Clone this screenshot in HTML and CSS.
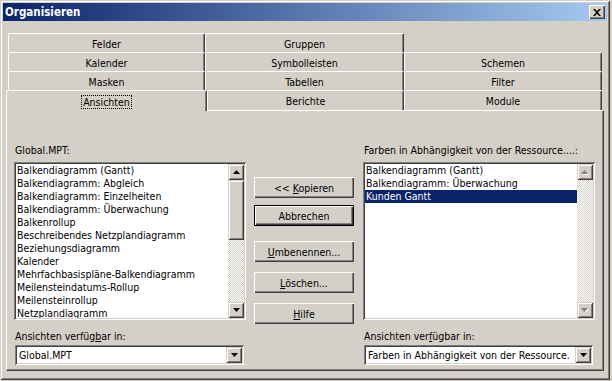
FILE: index.html
```html
<!DOCTYPE html>
<html lang="de">
<head>
  <meta charset="UTF-8">
  <meta name="viewport" content="width=device-width, initial-scale=1.0">
  <title>Organisieren</title>
  <link rel="stylesheet" href="styles.css">
</head>
<body>
  <div class="window">
    <div class="titlebar">
      <span class="title">Organisieren</span>
      <div class="close-btn">
        <svg width="8" height="7" viewBox="0 0 8 7">
          <path d="M0 0h2l2 2.2L6 0h2L5 3.5 8 7H6L4 4.8 2 7H0l3-3.5z" fill="#000"/>
        </svg>
      </div>
    </div>
    <div class="content">
      <div class="tabs">
        <div class="tab-row">
          <div class="tab w1">Felder</div>
          <div class="tab w2">Gruppen</div>
        </div>
        <div class="tab-row">
          <div class="tab w1">Kalender</div>
          <div class="tab w2">Symbolleisten</div>
          <div class="tab w3">Schemen</div>
        </div>
        <div class="tab-row">
          <div class="tab w1">Masken</div>
          <div class="tab w2">Tabellen</div>
          <div class="tab w3">Filter</div>
        </div>
        <div class="tab-row front">
          <div class="tab selected"><span class="focus">Ansichten</span></div>
          <div class="tab w2b">Berichte</div>
          <div class="tab w3">Module</div>
        </div>
      </div>

      <div class="panel">
        <div class="col">
          <div class="label">Global.MPT:</div>
          <div class="listbox">
            <ul class="items">
              <li>Balkendiagramm (Gantt)</li>
              <li>Balkendiagramm: Abgleich</li>
              <li>Balkendiagramm: Einzelheiten</li>
              <li>Balkendiagramm: Überwachung</li>
              <li>Balkenrollup</li>
              <li>Beschreibendes Netzplandiagramm</li>
              <li>Beziehungsdiagramm</li>
              <li>Kalender</li>
              <li>Mehrfachbasispläne-Balkendiagramm</li>
              <li>Meilensteindatums-Rollup</li>
              <li>Meilensteinrollup</li>
              <li>Netzplandiagramm</li>
            </ul>
            <div class="vscroll">
              <div class="sbtn"><svg width="7" height="4" viewBox="0 0 7 4"><path d="M3.5 0L7 4H0z" fill="#000"/></svg></div>
              <div class="thumb"></div>
              <div class="track"></div>
              <div class="sbtn"><svg width="7" height="4" viewBox="0 0 7 4"><path d="M0 0h7L3.5 4z" fill="#000"/></svg></div>
            </div>
          </div>
          <div class="label bottom">Ansichten verfüg<u>b</u>ar in:</div>
          <div class="combo">
            <span class="combo-text">Global.MPT</span>
            <div class="sbtn"><svg width="7" height="4" viewBox="0 0 7 4"><path d="M0 0h7L3.5 4z" fill="#000"/></svg></div>
          </div>
        </div>

        <div class="buttons">
          <div class="btn first"><span>&lt;&lt; <u>K</u>opieren</span></div>
          <div class="btn default"><span>Abbrechen</span></div>
          <div class="btn gap-big"><span><u>U</u>mbenennen...</span></div>
          <div class="btn gap-mid"><span><u>L</u>öschen...</span></div>
          <div class="btn gap-mid"><span><u>H</u>ilfe</span></div>
        </div>

        <div class="col">
          <div class="label">Farben in Abhängigkeit von der Ressource....:</div>
          <div class="listbox">
            <ul class="items">
              <li>Balkendiagramm (Gantt)</li>
              <li>Balkendiagramm: Überwachung</li>
              <li class="active">Kunden Gantt</li>
            </ul>
            <div class="vscroll">
              <div class="sbtn off"><svg width="8" height="5" viewBox="0 0 8 5"><path d="M4.5 1L8 5H1z" fill="#fff"/><path d="M3.5 0L7 4H0z" fill="#808080"/></svg></div>
              <div class="track"></div>
              <div class="sbtn off"><svg width="8" height="5" viewBox="0 0 8 5"><path d="M1 1h7L4.5 5z" fill="#fff"/><path d="M0 0h7L3.5 4z" fill="#808080"/></svg></div>
            </div>
          </div>
          <div class="label bottom">Ansichten ver<u>f</u>ügbar in:</div>
          <div class="combo">
            <span class="combo-text">Farben in Abhängigkeit von der Ressource.</span>
            <div class="sbtn"><svg width="7" height="4" viewBox="0 0 7 4"><path d="M0 0h7L3.5 4z" fill="#000"/></svg></div>
          </div>
        </div>
      </div>
    </div>
  </div>
</body>
</html>
```

FILE: styles.css
```css
body {
  margin: 0;
  background-color: #d4d0c8;
  font-family: "DejaVu Sans Condensed", "DejaVu Sans", sans-serif;
  font-stretch: condensed;
  font-size: 10.5px;
  color: #000;
}
.window {
  width: 610px;
  height: 380px;
  box-sizing: border-box;
  padding: 3px;
  background-color: #d4d0c8;
  box-shadow: inset 1px 1px #d4d0c8, inset -1px -1px #404040, inset 2px 2px #fff, inset -2px -2px #808080;
}
.titlebar {
  height: 18px;
  display: flex;
  align-items: center;
  justify-content: space-between;
  padding: 0 2px;
  background: linear-gradient(to right, #0a246a, #a6caf0);
}
.title {
  color: #fff;
  font-weight: bold;
  font-size: 11.5px;
}
.close-btn {
  width: 16px;
  height: 14px;
  box-sizing: border-box;
  display: flex;
  align-items: center;
  justify-content: center;
  background-color: #d4d0c8;
  box-shadow: inset 1px 1px #fff, inset -1px -1px #404040, inset -2px -2px #808080;
}
.content {
  padding: 12px 3px 0;
}

/* tabs */
.tabs {
  padding: 0 2px;
}
.tab-row {
  display: flex;
  align-items: flex-start;
  height: 19px;
}
.tab {
  height: 19px;
  box-sizing: border-box;
  display: flex;
  align-items: center;
  justify-content: center;
  padding-top: 1px;
  border-top: 1px solid #fff;
  border-left: 1px solid #fff;
  border-right: 1px solid #404040;
  border-radius: 2px 2px 0 0;
  box-shadow: inset -1px 0 #808080;
  background-color: #d4d0c8;
}
.w1 { width: 197px; }
.w2 { width: 199px; }
.w2b { width: 197px; }
.w3 { width: 198px; }
.tab-row.front {
  height: 20px;
  margin-left: -2px;
}
.tab-row.front .tab {
  height: 20px;
}
.tab-row.front .tab.selected {
  width: 201px;
  height: 21px;
  margin-bottom: -1px;
  position: relative;
  z-index: 1;
}
.focus {
  outline: 1px dotted #000;
  outline-offset: 0;
  padding: 0 1px;
  line-height: 12px;
}

/* panel */
.panel {
  height: 261px;
  box-sizing: border-box;
  display: flex;
  padding: 33px 0 0 7px;
  border-top: 1px solid #fff;
  border-left: 1px solid #fff;
  border-right: 1px solid #404040;
  border-bottom: 1px solid #404040;
  box-shadow: inset -1px -1px #808080;
}
.col {
  width: 232px;
  display: flex;
  flex-direction: column;
}
.label {
  line-height: 13px;
  height: 13px;
  padding-left: 1px;
  margin-bottom: 5px;
  white-space: nowrap;
}
.label.bottom {
  margin: 10px 0 2px;
}
.listbox {
  height: 158px;
  box-sizing: border-box;
  padding: 2px;
  display: flex;
  background-color: #fff;
  box-shadow: inset 1px 1px #808080, inset -1px -1px #fff, inset 2px 2px #404040, inset -2px -2px #d4d0c8;
}
.items {
  flex: 1;
  list-style: none;
  margin: 0;
  padding: 0;
  overflow: hidden;
}
.items li {
  height: 13px;
  line-height: 13px;
  padding-left: 1px;
  white-space: nowrap;
}
.items li.active {
  background-color: #0a246a;
  color: #fff;
}
.vscroll {
  width: 16px;
  display: flex;
  flex-direction: column;
}
.sbtn {
  width: 16px;
  height: 16px;
  flex: none;
  box-sizing: border-box;
  display: flex;
  align-items: center;
  justify-content: center;
  background-color: #d4d0c8;
  box-shadow: inset 1px 1px #d4d0c8, inset -1px -1px #404040, inset 2px 2px #fff, inset -2px -2px #808080;
}
.thumb {
  height: 60px;
  flex: none;
  background-color: #d4d0c8;
  box-shadow: inset 1px 1px #d4d0c8, inset -1px -1px #404040, inset 2px 2px #fff, inset -2px -2px #808080;
}
.track {
  flex: 1;
  background-color: #fff;
  background-image: repeating-conic-gradient(#d4d0c8 0 25%, #fff 0 50%);
  background-size: 2px 2px;
}
.combo {
  width: 229px;
  height: 20px;
  margin-left: 1px;
  box-sizing: border-box;
  padding: 2px;
  display: flex;
  align-items: center;
  background-color: #fff;
  box-shadow: inset 1px 1px #808080, inset -1px -1px #fff, inset 2px 2px #404040, inset -2px -2px #d4d0c8;
}
.combo-text {
  flex: 1;
  padding-left: 2px;
  white-space: nowrap;
  overflow: hidden;
}

/* middle buttons */
.buttons {
  width: 100px;
  margin: 0 9px 0 8px;
  display: flex;
  flex-direction: column;
}
.btn {
  height: 21px;
  box-sizing: border-box;
  display: flex;
  align-items: center;
  justify-content: center;
  white-space: pre;
  background-color: #d4d0c8;
  box-shadow: inset 1px 1px #fff, inset -1px -1px #404040, inset -2px -2px #808080;
}
.btn.first { margin-top: 33px; }
.btn.default {
  margin-top: 7px;
  border: 1px solid #000;
}
.btn.gap-big { margin-top: 15px; }
.btn.gap-mid { margin-top: 10px; }
u {
  text-decoration-thickness: 1px;
  text-underline-offset: 1px;
}
```
